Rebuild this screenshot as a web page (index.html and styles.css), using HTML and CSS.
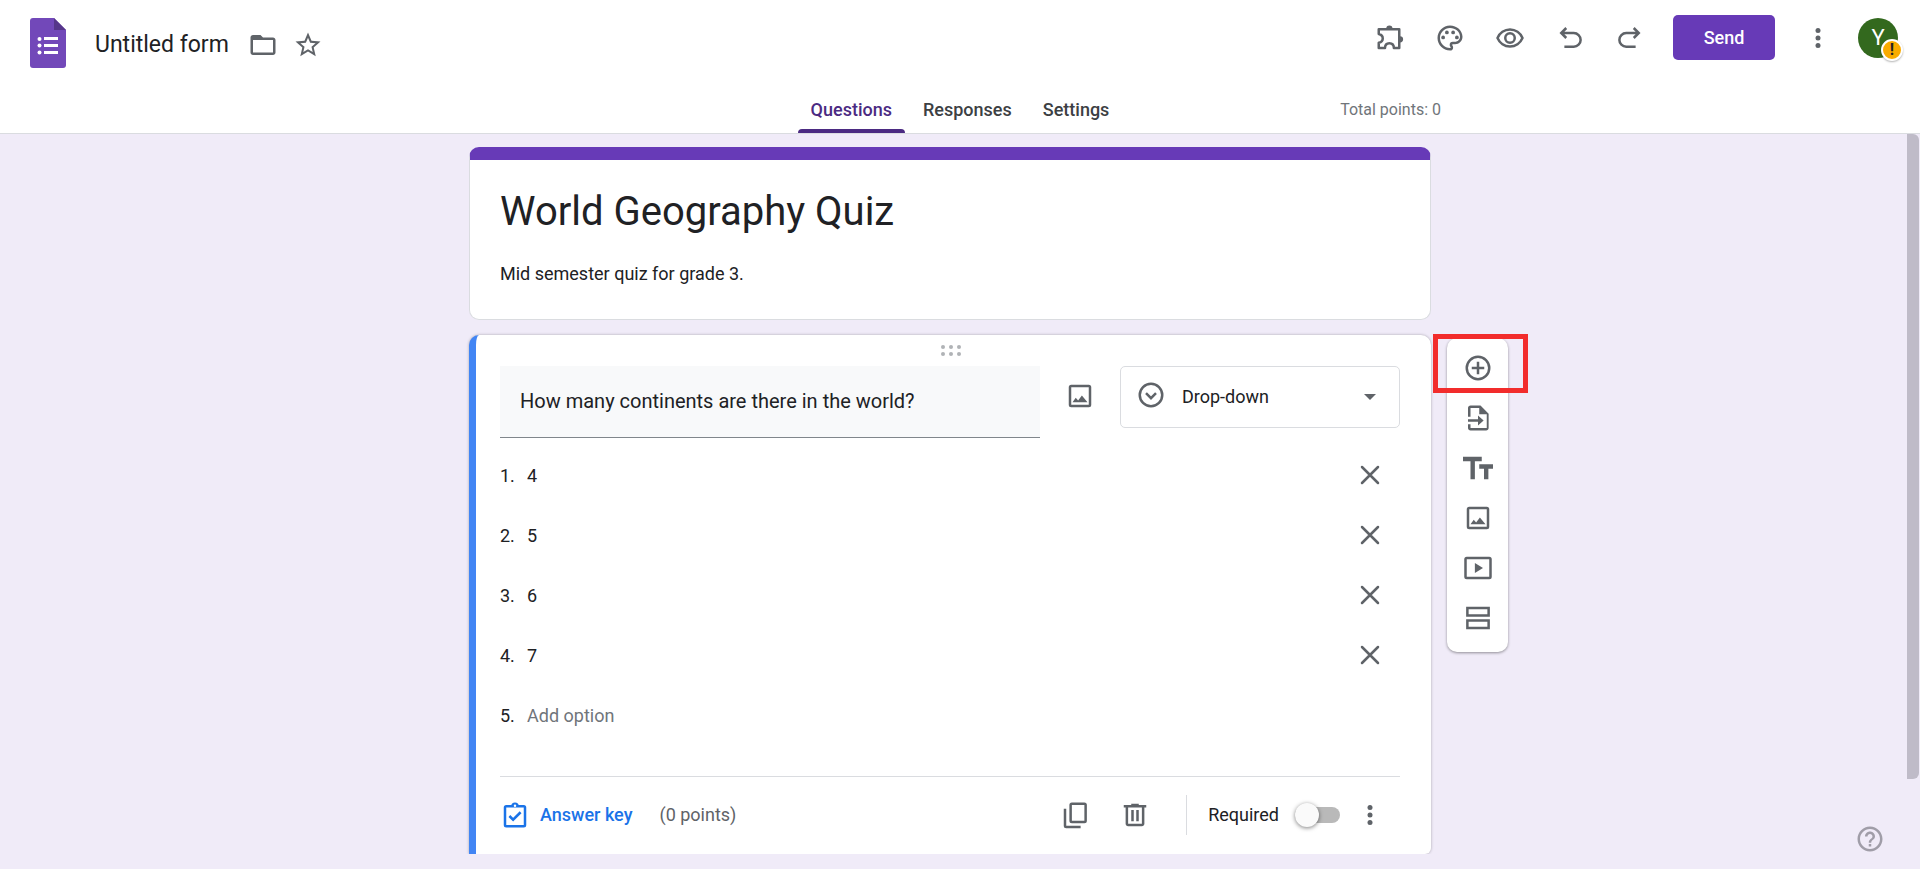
FILE: index.html
```
<!DOCTYPE html>
<html lang="en">
<head>
<meta charset="utf-8">
<title>Untitled form</title>
<meta name="viewport" content="width=device-width, initial-scale=1.0">
<link rel="stylesheet" href="styles.css">
</head>
<body>
  <svg class="sprite" aria-hidden="true">
    <symbol id="i-image" viewBox="0 0 24 24">
      <rect x="4" y="4" width="16" height="16" rx="1" fill="none" stroke="currentColor" stroke-width="2"/>
      <path d="M6 17l2.600-3.600 1.900 2.200 3-4 4.500 5.400z"/>
    </symbol>
    <symbol id="i-close" viewBox="0 0 24 24">
      <path d="M5.600 5.600l12.800 12.800M18.400 5.600L5.600 18.400" fill="none" stroke="currentColor" stroke-width="2" stroke-linecap="round"/>
    </symbol>
    <symbol id="i-more" viewBox="0 0 24 24">
      <circle cx="12" cy="6" r="2"/><circle cx="12" cy="12" r="2"/><circle cx="12" cy="18" r="2"/>
    </symbol>
  </svg>

  <header class="header">
    <div class="topbar">
      <div class="file">
        <a class="logo" href="#" aria-label="Forms home">
          <svg width="36" height="50" viewBox="0 0 36 50">
            <path fill="#7248b9" d="M3 0h21l12 12v35a3 3 0 0 1-3 3H3a3 3 0 0 1-3-3V3a3 3 0 0 1 3-3z"/>
            <path fill="#56368a" d="M24 0l12 12H24z"/>
            <g fill="#fff">
              <circle cx="9.500" cy="21" r="2"/><circle cx="9.500" cy="27.500" r="2"/><circle cx="9.500" cy="34.500" r="2"/>
              <path d="M14 19h14v3H14zM14 26h14v3H14zM14 33h14v3H14z"/>
            </g>
          </svg>
        </a>
        <input class="file-name" type="text" value="Untitled form" aria-label="Document title">
        <button class="file-btn" aria-label="Move to folder">
          <svg viewBox="0 0 24 24"><path d="M20 6h-8l-2-2H4c-1.100 0-2 .9-2 2v12c0 1.100.9 2 2 2h16c1.100 0 2-.9 2-2V8c0-1.100-.9-2-2-2zm0 12H4V8h16v10z"/></svg>
        </button>
        <button class="file-btn" aria-label="Star">
          <svg viewBox="0 0 24 24"><path d="M22 9.240l-7.190-.62L12 2 9.190 8.630 2 9.240l5.460 4.730L5.820 21 12 17.270 18.180 21l-1.630-7.030L22 9.240zM12 15.400l-3.760 2.270 1-4.280-3.320-2.880 4.380-.38L12 6.100l1.710 4.040 4.380.38-3.320 2.880 1 4.280L12 15.400z"/></svg>
        </button>
      </div>
      <div class="actions">
        <button class="icon-btn" aria-label="Add-ons">
          <svg viewBox="0 0 24 24">
            <path d="M3 5h16.400v15h-4.300c0-2.300-1.400-3.800-3.600-3.800S8 17.700 8 20H3v-4.200c2-.5 3.200-1.800 3.200-3.500S5 9.300 3 8.800z" fill="none" stroke="currentColor" stroke-width="2" stroke-linejoin="round"/>
            <path d="M9 4.500a2.500 2.500 0 0 1 5 0zM20 10.500a2.500 2.500 0 0 1 0 5z"/>
          </svg>
        </button>
        <button class="icon-btn" aria-label="Customise theme">
          <svg viewBox="0 0 24 24">
            <path d="M12 22C6.490 22 2 17.510 2 12S6.490 2 12 2s10 4.040 10 9c0 3.310-2.690 6-6 6h-1.770c-.28 0-.5.22-.5.5 0 .12.050.23.130.33.410.47.640 1.060.640 1.670A2.500 2.500 0 0 1 12 22zm0-18c-4.410 0-8 3.590-8 8s3.590 8 8 8c.28 0 .5-.22.5-.5a.54.54 0 0 0-.14-.35c-.41-.46-.63-1.050-.63-1.650a2.500 2.500 0 0 1 2.500-2.500H16c2.210 0 4-1.790 4-4 0-3.860-3.590-7-8-7z"/>
            <circle cx="6.500" cy="11.500" r="1.500"/><circle cx="9.500" cy="7.500" r="1.500"/><circle cx="14.500" cy="7.500" r="1.500"/><circle cx="17.500" cy="11.500" r="1.500"/>
          </svg>
        </button>
        <button class="icon-btn" aria-label="Preview">
          <svg viewBox="0 0 24 24">
            <path d="M2 12C3.700 8 7.600 5.200 12 5.200s8.300 2.800 10 6.800c-1.700 4-5.600 6.800-10 6.800S3.700 16 2 12z" fill="none" stroke="currentColor" stroke-width="2" stroke-linejoin="round"/>
            <circle cx="12" cy="12" r="3.800" fill="none" stroke="currentColor" stroke-width="2"/>
          </svg>
        </button>
        <button class="icon-btn" aria-label="Undo">
          <svg viewBox="0 0 24 24"><path d="M9 4L5 8l4 4M5.500 8H15a5 5 0 0 1 0 11H7.500" fill="none" stroke="currentColor" stroke-width="2"/></svg>
        </button>
        <button class="icon-btn" aria-label="Redo">
          <svg viewBox="0 0 24 24"><path d="M15 4l4 4-4 4M18.500 8H9a5 5 0 0 0 0 11h7.500" fill="none" stroke="currentColor" stroke-width="2"/></svg>
        </button>
        <button class="send">Send</button>
        <button class="icon-btn" aria-label="More"><svg><use href="#i-more"/></svg></button>
        <button class="avatar" aria-label="Account">Y<span class="badge">!</span></button>
      </div>
    </div>
    <div class="tabbar">
      <nav class="tabs">
        <a class="tab active" href="#questions">Questions</a>
        <a class="tab" href="#responses">Responses</a>
        <a class="tab" href="#settings">Settings</a>
      </nav>
      <span class="total">Total points: 0</span>
    </div>
  </header>

  <main class="main">
    <div class="form">
      <section class="card title-card">
        <h1>World Geography Quiz</h1>
        <p>Mid semester quiz for grade 3.</p>
      </section>

      <section class="card question" id="questions">
        <div class="drag">
          <svg width="20" height="12" viewBox="0 0 20 12">
            <circle cx="2" cy="2" r="2"/><circle cx="10" cy="2" r="2"/><circle cx="18" cy="2" r="2"/>
            <circle cx="2" cy="9" r="2"/><circle cx="10" cy="9" r="2"/><circle cx="18" cy="9" r="2"/>
          </svg>
        </div>
        <div class="question-row">
          <input class="question-text" type="text" value="How many continents are there in the world?" aria-label="Question">
          <button class="icon-btn" aria-label="Add image"><svg><use href="#i-image"/></svg></button>
          <div class="type">
            <svg class="type-icon" viewBox="0 0 24 24">
              <circle cx="12" cy="12" r="9" fill="none" stroke="currentColor" stroke-width="2"/>
              <path d="M8 10.500l4 4 4-4" fill="none" stroke="currentColor" stroke-width="2"/>
            </svg>
            <select aria-label="Question type">
              <option>Drop-down</option>
            </select>
            <svg class="type-arrow" width="12" height="6" viewBox="0 0 12 6"><path d="M0 0h12L6 6z"/></svg>
          </div>
        </div>

        <ol class="options">
          <li><span class="num">1.</span><input type="text" value="4" aria-label="Option 1"><button class="icon-btn" aria-label="Remove option 1"><svg><use href="#i-close"/></svg></button></li>
          <li><span class="num">2.</span><input type="text" value="5" aria-label="Option 2"><button class="icon-btn" aria-label="Remove option 2"><svg><use href="#i-close"/></svg></button></li>
          <li><span class="num">3.</span><input type="text" value="6" aria-label="Option 3"><button class="icon-btn" aria-label="Remove option 3"><svg><use href="#i-close"/></svg></button></li>
          <li><span class="num">4.</span><input type="text" value="7" aria-label="Option 4"><button class="icon-btn" aria-label="Remove option 4"><svg><use href="#i-close"/></svg></button></li>
          <li><span class="num">5.</span><input type="text" placeholder="Add option" aria-label="Add option"></li>
        </ol>

        <div class="question-foot">
          <button class="answer-key">
            <svg viewBox="0 0 24 24">
              <rect x="4" y="5" width="16" height="16" rx="1" fill="none" stroke="currentColor" stroke-width="2"/>
              <path d="M9 5a3 3 0 0 1 6 0z"/><circle cx="12" cy="4.500" r="1" fill="#fff"/>
              <path d="M7.500 12.800l3 3 6-6" fill="none" stroke="currentColor" stroke-width="2"/>
            </svg>
            Answer key
          </button>
          <span class="points">(0 points)</span>
          <div class="tools">
            <button class="icon-btn" aria-label="Duplicate">
              <svg viewBox="0 0 24 24"><path d="M4 7v13.500a1 1 0 0 0 1 1h11.500" fill="none" stroke="currentColor" stroke-width="2"/><rect x="8.500" y="3" width="12" height="14.500" rx="1" fill="none" stroke="currentColor" stroke-width="2"/></svg>
            </button>
            <button class="icon-btn" aria-label="Delete">
              <svg viewBox="0 0 24 24"><path d="M15 4V3H9v1H3v2h1.500v13c0 1.100.9 2 2 2h11c1.100 0 2-.9 2-2V6H21V4h-6zm2.500 15h-11V6h11v13zM9 8h2v9H9zM13 8h2v9h-2z"/></svg>
            </button>
            <span class="sep"></span>
            <label class="required">Required <input class="switch" type="checkbox"></label>
            <button class="icon-btn" aria-label="More options"><svg><use href="#i-more"/></svg></button>
          </div>
        </div>
      </section>
    </div>

    <aside class="side">
      <div class="toolbar">
        <button aria-label="Add question">
          <svg viewBox="0 0 24 24"><circle cx="12" cy="12" r="9" fill="none" stroke="currentColor" stroke-width="2"/><path d="M12 7v10M7 12h10" fill="none" stroke="currentColor" stroke-width="2"/></svg>
        </button>
        <button aria-label="Import questions">
          <svg viewBox="0 0 24 24"><path d="M14 2H6c-1.100 0-2 .9-2 2v7h2V4h7v5h6v11H6v-3H4v3c0 1.100.9 2 2 2h12.500c1.100 0 2-.9 2-2V8.500z"/><path d="M4 13h8v-3l4.500 4-4.500 4v-3H4z"/></svg>
        </button>
        <button aria-label="Add title and description">
          <svg viewBox="0 0 24 24"><path d="M0 3h15v3.500H9.500V21H6V6.500H0zM13 9h11v3.500h-3.700V21h-3.500v-8.500H13z"/></svg>
        </button>
        <button aria-label="Add image"><svg><use href="#i-image"/></svg></button>
        <button aria-label="Add video">
          <svg viewBox="0 0 24 24"><rect x="2" y="4" width="20" height="16" rx="1" fill="none" stroke="currentColor" stroke-width="2"/><path d="M9.500 8v8l6.500-4z"/></svg>
        </button>
        <button aria-label="Add section">
          <svg viewBox="0 0 24 24"><path d="M3.500 4h17v6h-17zM3.500 14h17v6h-17z" fill="none" stroke="currentColor" stroke-width="2"/></svg>
        </button>
        <span class="highlight"></span>
      </div>
    </aside>
    <div class="scrollbar"></div>
    <button class="help" aria-label="Help">
      <svg viewBox="0 0 24 24"><path d="M11 18h2v-2h-2v2zm1-16C6.480 2 2 6.480 2 12s4.480 10 10 10 10-4.480 10-10S17.520 2 12 2zm0 18c-4.410 0-8-3.590-8-8s3.590-8 8-8 8 3.590 8 8-3.590 8-8 8zm0-14c-2.210 0-4 1.790-4 4h2c0-1.100.9-2 2-2s2 .9 2 2c0 2-3 1.750-3 5h2c0-2.250 3-2.500 3-5 0-2.210-1.790-4-4-4z"/></svg>
    </button>
  </main>
</body>
</html>
```

FILE: styles.css
```
* { box-sizing: border-box; }

body {
  margin: 0;
  height: 100vh;
  display: flex;
  flex-direction: column;
  overflow: hidden;
  background: #f0ebf8;
  color: #202124;
  font-family: Roboto, sans-serif;
  font-size: 18px;
}
button, input, select {
  font: inherit;
  color: inherit;
  background: none;
  border: none;
  padding: 0;
  margin: 0;
  outline: none;
}
button { cursor: pointer; }
svg {
  display: block;
  fill: currentColor;
  flex: none;
}
.sprite {
  position: absolute;
  width: 0;
  height: 0;
}

/* header */
.header {
  flex: none;
  background: #fff;
  border-bottom: 1px solid #dadce0;
}
.topbar {
  display: flex;
  justify-content: space-between;
  height: 76px;
  padding: 0 22px 0 30px;
}
.file {
  display: flex;
  align-items: center;
  padding-top: 10px;
}
.file-name {
  width: 138px;
  margin-left: 29px;
  padding-top: 2px;
  font-size: 23px;
}
.file-btn {
  margin: 4px 0 0 15px;
  color: #5f6368;
}
.file-btn svg, .icon-btn svg, .toolbar svg, .answer-key svg, .help svg {
  width: 30px;
  height: 30px;
}
.actions {
  display: flex;
  align-items: center;
  padding-bottom: 1px;
}
.icon-btn {
  display: flex;
  align-items: center;
  justify-content: center;
  width: 60px;
  height: 60px;
  flex: none;
  color: #5f6368;
}
.send {
  width: 102px;
  height: 45px;
  margin: 0 13px;
  border-radius: 5px;
  background: #673ab7;
  color: #fff;
  font-weight: 500;
}
.avatar {
  position: relative;
  width: 40px;
  height: 40px;
  margin-left: 10px;
  border-radius: 50%;
  background: #33691e;
  color: #fff;
  font-size: 22px;
}
.badge {
  position: absolute;
  right: -5px;
  bottom: -3px;
  width: 22px;
  height: 22px;
  border: 2px solid #fff;
  border-radius: 50%;
  background: #f9ab00;
  color: #202124;
  box-shadow: 0 1px 2px rgba(0, 0, 0, .3);
  font-size: 16px;
  font-weight: 700;
  line-height: 18px;
}
.tabbar {
  display: grid;
  grid-template-columns: 1fr auto 1fr;
  align-items: center;
  max-width: 962px;
  height: 57px;
  margin: 0 auto;
}
.tabs {
  grid-column: 2;
  align-self: end;
  display: flex;
  gap: 5px;
}
.tab {
  position: relative;
  height: 47px;
  padding: 0 13px;
  color: #3c4043;
  font-weight: 500;
  line-height: 47px;
  text-decoration: none;
}
.tab.active { color: #4b2a82; }
.tab.active:after {
  content: "";
  position: absolute;
  left: 0;
  right: 0;
  bottom: 0;
  height: 4px;
  border-radius: 4px 4px 0 0;
  background: #4b2a82;
}
.total {
  justify-self: end;
  padding-top: 10px;
  color: #70757a;
  font-size: 16px;
}

/* form */
.main {
  position: relative;
  flex: 1;
  min-height: 0;
  display: grid;
  grid-template-columns: 1fr minmax(0, 962px) 1fr;
  align-items: start;
  padding: 13px 20px 15px 0;
}
.form { grid-column: 2; }
.card {
  background: #fff;
  border: 1px solid #dadce0;
  border-radius: 10px;
}
.title-card {
  margin-bottom: 15px;
  padding: 26px 30px 30px;
  border-top: 13px solid #673ab7;
}
.title-card h1 {
  margin: 0;
  font-size: 40px;
  font-weight: 400;
  line-height: 52px;
}
.title-card p {
  margin: 21px 0 0;
  line-height: 30px;
}
.question {
  padding: 0 31px 0 24px;
  border: none;
  border-left: 7px solid #4285f4;
  border-radius: 10px 10px 6px 0;
  box-shadow: 0 0 3px rgba(0, 0, 0, .3);
  clip-path: inset(-4px -4px 0 -4px);
}
.drag {
  display: flex;
  justify-content: center;
  align-items: center;
  height: 31px;
  padding-left: 1px;
  color: #b0b3b6;
}
.question-row {
  display: flex;
  align-items: flex-start;
}
.question-text {
  flex: 1;
  min-width: 0;
  height: 72px;
  padding: 0 20px 2px;
  background: #f8f9fa;
  border-bottom: 1px solid #80868b;
  font-size: 20px;
}
.question-row .icon-btn { margin: 0 10px; }
.type {
  position: relative;
  width: 280px;
}
.type select {
  width: 100%;
  height: 62px;
  padding: 0 0 1px 61px;
  border: 1px solid #dadce0;
  border-radius: 5px;
  appearance: none;
}
.type-icon {
  position: absolute;
  left: 16px;
  top: 14px;
  width: 30px;
  height: 30px;
  color: #5f6368;
}
.type-arrow {
  position: absolute;
  right: 24px;
  top: 28px;
  color: #5f6368;
}
.options {
  margin: 7px 0 31px;
  padding: 0;
  list-style: none;
}
.options li {
  display: flex;
  align-items: center;
  height: 60px;
}
.num { width: 27px; }
.options input { flex: 1; }
.options input::placeholder {
  color: #70757a;
  opacity: 1;
}
.question-foot {
  display: flex;
  align-items: center;
  height: 78px;
  padding-bottom: 2px;
  border-top: 1px solid #dadce0;
}
.answer-key {
  display: flex;
  align-items: center;
  gap: 10px;
  color: #1a73e8;
  font-weight: 500;
}
.points {
  margin-left: 27px;
  color: #5f6368;
}
.tools {
  display: flex;
  align-items: center;
  margin-left: auto;
}
.sep {
  width: 1px;
  height: 40px;
  margin: 0 21px;
  background: #dadce0;
}
.required {
  display: flex;
  align-items: center;
  gap: 16px;
}
.switch {
  position: relative;
  width: 45px;
  height: 16px;
  border-radius: 8px;
  background: #b9b9b9;
  appearance: none;
}
.switch:before {
  content: "";
  position: absolute;
  left: 0;
  top: -4px;
  width: 24px;
  height: 24px;
  border-radius: 50%;
  background: #fafafa;
  box-shadow: 0 1px 4px rgba(0, 0, 0, .5);
}

/* floating toolbar */
.side {
  padding: 191px 0 0 16px;
}
.toolbar {
  position: relative;
  display: flex;
  flex-direction: column;
  width: 61px;
  padding: 5px 0 9px;
  border-radius: 10px;
  background: #fff;
  box-shadow: 0 1px 3px rgba(0, 0, 0, .4);
}
.toolbar button {
  display: flex;
  align-items: center;
  justify-content: center;
  height: 50px;
  color: #5f6368;
}
.highlight {
  position: absolute;
  left: -14px;
  top: -4px;
  width: 95px;
  height: 59px;
  border: 5px solid #f22c2c;
  pointer-events: none;
}
.scrollbar {
  position: absolute;
  top: 0;
  right: 1px;
  width: 12px;
  height: 645px;
  border-radius: 0 6px 6px 0;
  background: #bfbbc8;
}
.help {
  position: absolute;
  right: 35px;
  bottom: 15px;
  color: #a09da8;
}
```
